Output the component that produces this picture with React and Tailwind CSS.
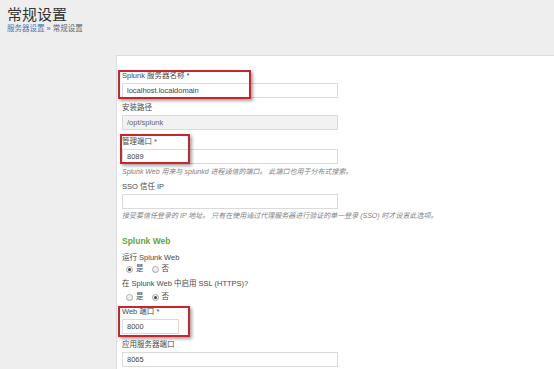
import React from 'react'

const font = { fontFamily: '"Liberation Sans", "Noto Sans CJK SC", sans-serif' }

function Label({ children, className = '' }) {
  return <div className={`h-[10px] text-[7.5px] leading-[10px] text-[#484848] whitespace-nowrap ${className}`}>{children}</div>
}

function Input({ value, className = '', disabled }) {
  return (
    <div
      className={`h-[15px] border border-[#dadada] px-[4px] text-[7.5px] leading-[13px] whitespace-nowrap ${
        disabled ? 'bg-[#f2f2f2] text-[#666]' : 'bg-white text-[#444]'
      } ${className}`}
    >
      {value}
    </div>
  )
}

function Help({ children, className = '' }) {
  return <div className={`h-[10px] text-[7px] leading-[10px] italic text-[#808080] whitespace-nowrap ${className}`}>{children}</div>
}

function Radio({ checked }) {
  return (
    <span className="inline-flex h-[7px] w-[7px] items-center justify-center rounded-full border border-[#a8a8a8] bg-gradient-to-b from-white to-[#e4e4e4]">
      {checked && <span className="h-[3px] w-[3px] rounded-full bg-[#444]" />}
    </span>
  )
}

function RadioRow({ yes, className = '' }) {
  return (
    <div className={`flex h-[10px] items-center gap-[3px] pl-[4px] text-[7.5px] leading-[10px] text-[#484848] ${className}`}>
      <Radio checked={yes} />
      <span>是</span>
      <span className="ml-[2px]" />
      <Radio checked={!yes} />
      <span>否</span>
    </div>
  )
}

function Mark({ className }) {
  return <div className={`absolute border-2 border-[#c9252b] shadow-[2px_2px_3px_rgba(0,0,0,0.35)] ${className}`} />
}

export default function App() {
  return (
    <div className="flex h-[369px] w-[554px] flex-col overflow-hidden bg-[#eeeeee]" style={font}>
      <div className="h-[55px] pl-[7px] pt-[5px]">
        <div className="text-[15px] leading-[19px] text-[#333]">常规设置</div>
        <div className="text-[7.5px] leading-[10px] text-[#666]">
          <span className="text-[#3f77b5]">服务器设置</span> » 常规设置
        </div>
      </div>
      <div className="flex flex-1">
        <div className="w-[116px]" />
        <div className="relative flex-1 border-l border-t border-[#dcdcdc] bg-white pl-[5px] pt-[15px]">
          <Label>Splunk 服务器名称 *</Label>
          <Input className="mt-[2px] w-[216px]" value="localhost.localdomain" />

          <Label className="mt-[5px] text-[#666]">安装路径</Label>
          <Input className="mt-[2px] w-[216px]" value="/opt/splunk" disabled />

          <Label className="mt-[7px]">管理端口 *</Label>
          <Input className="mt-[2px] w-[216px]" value="8089" />
          <Help className="mt-[3px]">Splunk Web 用来与 splunkd 进程通信的端口。 此端口也用于分布式搜索。</Help>

          <Label className="mt-[5px]">SSO 信任 IP</Label>
          <Input className="mt-[2px] w-[216px]" value="" />
          <Help className="mt-[2px]">接受要信任登录的 IP 地址。 只有在使用通过代理服务器进行验证的单一登录 (SSO) 时才设置此选项。</Help>

          <div className="mt-[14px] h-[12px] text-[8.5px] font-bold leading-[12px] text-[#65a637]">Splunk Web</div>

          <Label className="mt-[6px]">运行 Splunk Web</Label>
          <RadioRow yes className="mt-[1px]" />

          <Label className="mt-[5px]">在 Splunk Web 中启用 SSL (HTTPS)?</Label>
          <RadioRow yes={false} className="mt-[3px]" />

          <Label className="mt-[5px]">Web 端口 *</Label>
          <Input className="mt-[2px] h-[14px] w-[57px] leading-[12px]" value="8000" />

          <Label className="mt-[6px]">应用服务器端口</Label>
          <Input className="mt-[2px] w-[216px]" value="8065" />

          <Mark className="left-[1px] top-[14px] h-[29px] w-[133px]" />
          <Mark className="left-[3px] top-[78px] h-[30px] w-[70px]" />
          <Mark className="left-[1px] top-[250px] h-[31px] w-[72px]" />
        </div>
      </div>
    </div>
  )
}
